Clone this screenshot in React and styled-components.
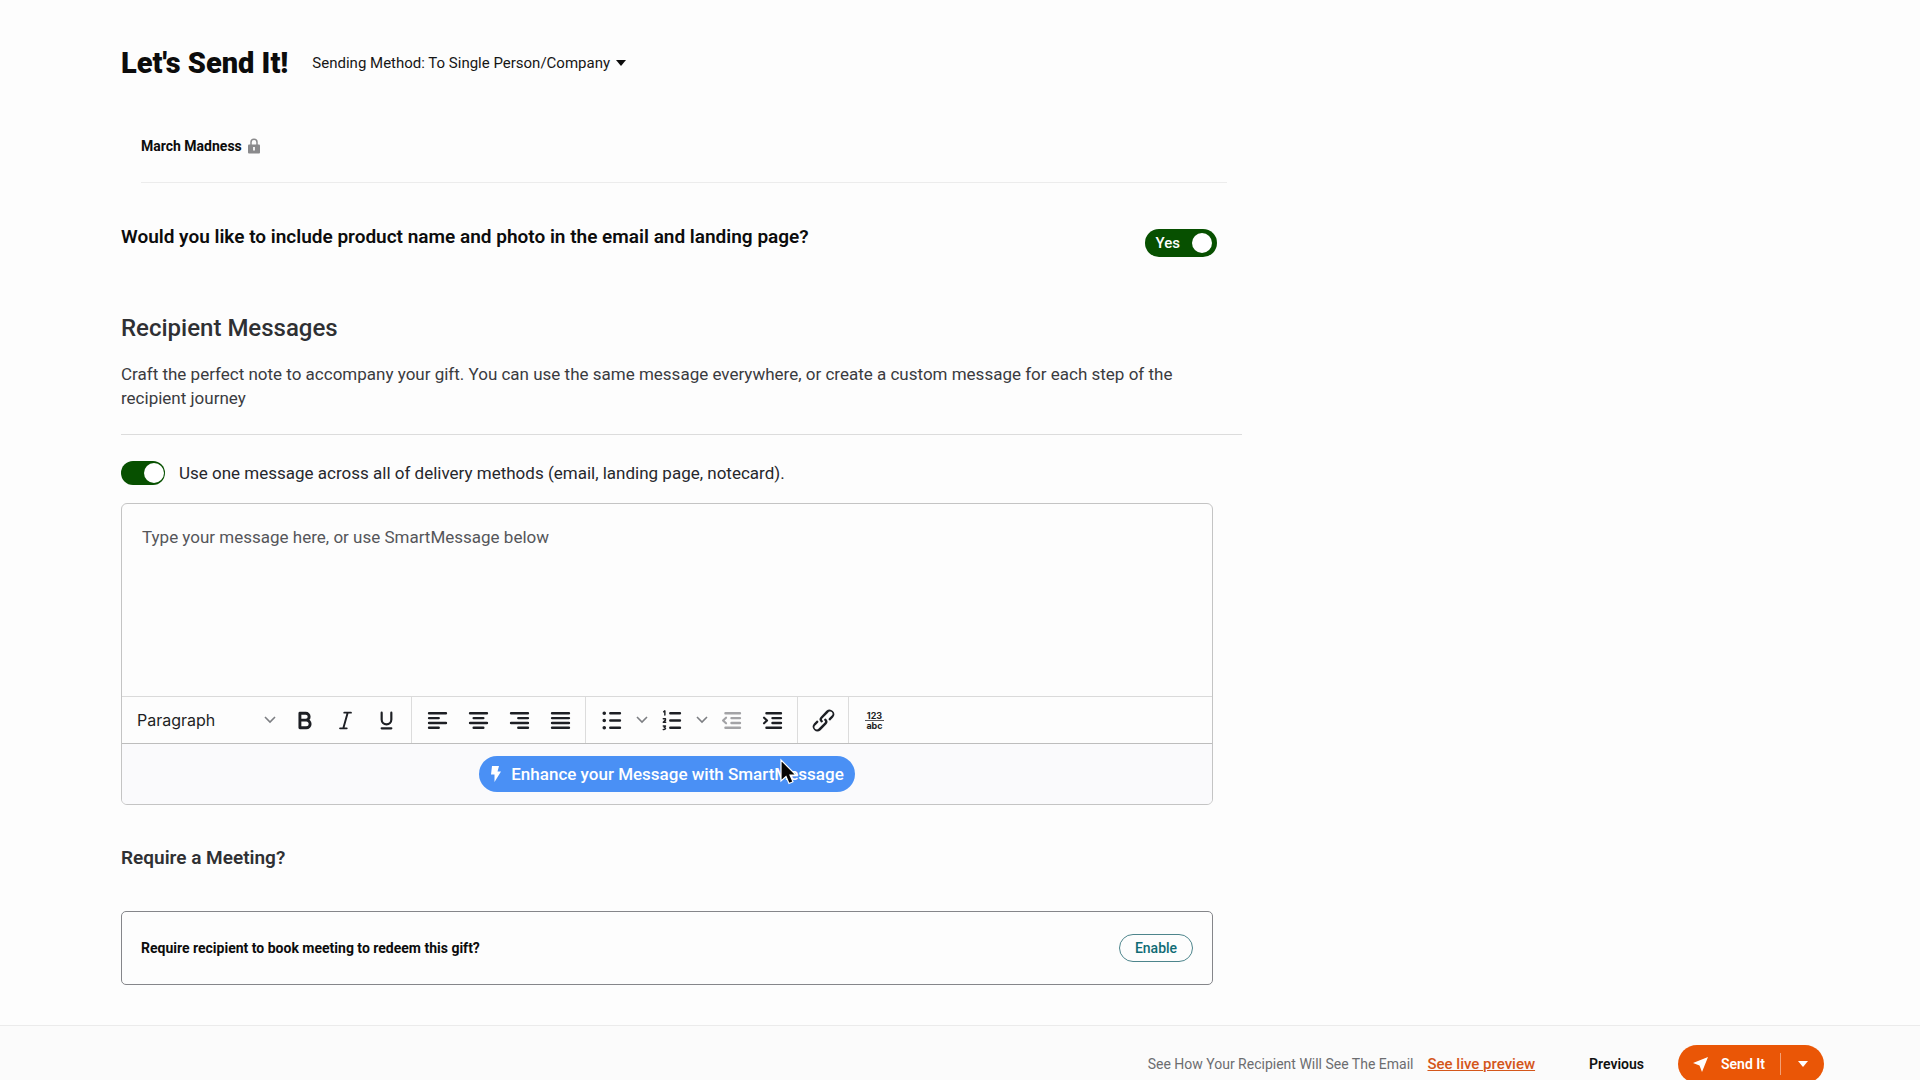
import React from 'react'
import styled, { createGlobalStyle } from 'styled-components'

const GlobalStyle = createGlobalStyle`
  * {
    box-sizing: border-box;
  }
  body {
    margin: 0;
    background-color: #fdfdfd;
    color: #0c0c0c;
    font-family: Roboto, "Liberation Sans", sans-serif;
    font-size: 16px;
  }
  h1, h2, h3, p {
    margin: 0;
  }
  button, select, textarea {
    font-family: inherit;
  }
`;

const Page = styled.div`
  display: flex;
  flex-direction: column;
  min-height: 100vh;
`;

const Content = styled.main`
  flex: 1;
  width: 100%;
  max-width: 1242px;
  padding: 40px 0 40px 121px;
`;

const Header = styled.header`
  display: flex;
  align-items: center;
  gap: 24px;
  height: 46px;
`;

const Title = styled.h1`
  font-size: 29px;
  font-weight: 900;
`;

const SelectBox = styled.div`
  position: relative;
  display: flex;
  align-items: center;
`;

const MethodSelect = styled.select`
  appearance: none;
  width: 316px;
  height: 36px;
  padding: 0;
  border: none;
  background: transparent;
  color: #161616;
  font-size: 15px;
`;

const SelectIcon = styled.svg`
  position: absolute;
  right: ${(props) => props.$right}px;
  pointer-events: none;
`;

const Campaign = styled.div`
  display: flex;
  align-items: center;
  gap: 6px;
  height: 73px;
  margin: 24px 15px 0 20px;
  border-bottom: 1px solid #ececec;
  font-size: 14px;
  font-weight: 700;
`;

const Section = styled.section`
  margin-right: 29px;
`;

const QuestionRow = styled.div`
  display: flex;
  align-items: flex-start;
  justify-content: space-between;
  margin-top: 42px;
`;

const Question = styled.h2`
  font-size: 19px;
  font-weight: 600;
  line-height: 24px;
`;

const Switch = styled.label`
  display: flex;
  align-items: center;
  justify-content: flex-end;
  width: ${(props) => (props.$wide ? 72 : 44)}px;
  height: ${(props) => (props.$wide ? 28 : 24)}px;
  margin: ${(props) => (props.$wide ? '4px -4px 0 0' : '0')};
  padding: 0 ${(props) => (props.$wide ? 5 : 1)}px;
  gap: 12px;
  border-radius: 14px;
  background-color: #075000;
  color: #fff;
  font-size: 15px;
  font-weight: 500;
  cursor: pointer;
`;

const SwitchInput = styled.input`
  appearance: none;
  width: 20px;
  height: 20px;
  margin: 0;
  border-radius: 50%;
  background-color: #fff;
`;

const Heading = styled.h2`
  margin-top: 55px;
  color: #2f3033;
  font-size: 24px;
  font-weight: 500;
  line-height: 32px;
`;

const Description = styled.p`
  margin-top: 18px;
  color: #3a3b3f;
  font-size: 17px;
  line-height: 24px;
`;

const Divider = styled.hr`
  height: 1px;
  margin: 24px 0 26px;
  border: none;
  background-color: #dcdcdc;
`;

const OneMessage = styled.div`
  display: flex;
  align-items: center;
  gap: 14px;
  color: #26272c;
  font-size: 17px;
`;

const Editor = styled.div`
  margin-top: 18px;
  border: 1px solid #c4c4c4;
  border-radius: 6px;
  overflow: hidden;
`;

const Message = styled.textarea`
  display: block;
  width: 100%;
  height: 192px;
  padding: 21px 20px;
  border: none;
  outline: none;
  resize: none;
  background: transparent;
  font-size: 17px;
  line-height: 24px;
  &::placeholder {
    color: #55565a;
    opacity: 1;
  }
`;

const Toolbar = styled.div`
  display: flex;
  height: 48px;
  border-top: 1px solid #dadada;
  border-bottom: 1px solid #bdbdbd;
`;

const Group = styled.div`
  display: flex;
  align-items: center;
  padding: 0 4px 0 5px;
  border-right: ${(props) => (props.$last ? 'none' : '1px solid #dcdcdc')};
`;

const FormatSelect = styled.select`
  appearance: none;
  width: 157px;
  height: 34px;
  padding: 0 0 0 10px;
  border: none;
  background: transparent;
  color: #1d1f24;
  font-family: Inter, "Liberation Sans", sans-serif;
  font-size: 16px;
`;

const Tool = styled.button`
  display: flex;
  flex-direction: column;
  align-items: center;
  justify-content: center;
  width: ${(props) => (props.$narrow ? 19 : 41)}px;
  height: 34px;
  padding: 0;
  border: none;
  background: transparent;
  color: ${(props) => (props.$muted ? '#a3a3a6' : '#1d1f24')};
`;

const CountText = styled.span`
  font-family: Inter, "Liberation Sans", sans-serif;
  font-size: 9px;
  font-weight: 700;
  line-height: 9px;
  &:first-child {
    width: 19px;
    border-bottom: 1px solid #55565a;
  }
`;

const SmartBar = styled.div`
  display: flex;
  align-items: center;
  justify-content: center;
  height: 60px;
  background-color: #fafafc;
`;

const SmartButton = styled.button`
  position: relative;
  display: flex;
  align-items: center;
  gap: 9px;
  height: 36px;
  padding: 0 11px 0 10px;
  border: none;
  border-radius: 18px;
  background-color: #4a90f5;
  color: #fff;
  font-size: 17px;
  font-weight: 500;
`;

const Pointer = styled.svg`
  position: absolute;
  top: 2px;
  right: 58px;
`;

const MeetingHeading = styled.h3`
  margin-top: 41px;
  color: #2f3033;
  font-size: 19px;
  font-weight: 600;
  line-height: 24px;
`;

const MeetingCard = styled.div`
  display: flex;
  align-items: center;
  justify-content: space-between;
  height: 74px;
  margin-top: 41px;
  padding: 0 19px;
  border: 1px solid #85868a;
  border-radius: 5px;
  font-size: 14px;
  font-weight: 700;
`;

const EnableButton = styled.button`
  width: 74px;
  height: 28px;
  padding: 0;
  border: 1px solid #4d858c;
  border-radius: 14px;
  background: transparent;
  color: #0f6b74;
  font-size: 14px;
  font-weight: 500;
`;

const Footer = styled.footer`
  display: flex;
  justify-content: flex-end;
  align-items: center;
  padding: 19px 96px 19px 0;
  border-top: 1px solid #ebebeb;
  background-color: #fbfbfb;
`;

const FooterText = styled.span`
  margin-right: 14px;
  color: #6c6d70;
  font-size: 14px;
`;

const PreviewLink = styled.a`
  color: #d4561a;
  font-size: 15px;
  font-weight: 500;
`;

const PreviousButton = styled.button`
  margin: 0 34px 0 54px;
  padding: 0;
  border: none;
  background: transparent;
  color: #111;
  font-size: 14px;
  font-weight: 600;
`;

const SendGroup = styled.div`
  display: flex;
  align-items: center;
  width: 146px;
  height: 38px;
  border-radius: 19px;
  background-color: #ea5606;
`;

const SendButton = styled.button`
  display: flex;
  align-items: center;
  gap: 13px;
  width: 103px;
  height: 22px;
  padding: 0 0 0 15px;
  border: none;
  border-right: 1px solid #f3a075;
  background: transparent;
  color: #fff;
  font-size: 14px;
  font-weight: 600;
`;

const SendMore = styled.button`
  display: flex;
  flex: 1;
  align-items: center;
  justify-content: center;
  height: 38px;
  padding: 0;
  border: none;
  background: transparent;
`;

const Icon = ({ children }) => (
  <svg width="29" height="29" viewBox="0 0 24 24" fill="none" stroke="currentColor" strokeWidth="2" strokeLinecap="round" strokeLinejoin="round" aria-hidden="true">
    {children}
  </svg>
)

const Chevron = () => (
  <svg width="12" height="8" viewBox="0 0 12 8" fill="none" stroke="#7d7f83" strokeWidth="1.6" aria-hidden="true">
    <path d="M1 1l5 5 5-5" />
  </svg>
)

const aligns = [
  { label: 'Align left', d: 'M5 6h14M5 10h8M5 14h14M5 18h8' },
  { label: 'Align center', d: 'M5 6h14M8 10h8M5 14h14M8 18h8' },
  { label: 'Align right', d: 'M5 6h14M11 10h8M5 14h14M11 18h8' },
  { label: 'Justify', d: 'M5 6h14M5 10h14M5 14h14M5 18h14' },
]

export default function App() {
  return (
    <Page>
      <GlobalStyle />
      <Content>
        <Header>
          <Title>Let's Send It!</Title>
          <SelectBox>
            <MethodSelect aria-label="Sending method">
              <option>Sending Method: To Single Person/Company</option>
            </MethodSelect>
            <SelectIcon $right={2} width="10" height="6" viewBox="0 0 10 6">
              <path d="M0 0h10L5 6z" fill="#0c0c0c" />
            </SelectIcon>
          </SelectBox>
        </Header>
        <Campaign>
          March Madness
          <svg width="12" height="16" viewBox="0 0 12 16" aria-hidden="true">
            <path d="M3 7V4.200a3 3 0 0 1 6 0V7" fill="none" stroke="#8a8a8c" strokeWidth="1.500" />
            <rect x="0" y="6.500" width="12" height="9" rx="1" fill="#8a8a8c" />
            <path d="M6 9v3.500" stroke="#eee" strokeWidth="2" />
          </svg>
        </Campaign>

        <Section>
          <QuestionRow>
            <Question>Would you like to include product name and photo in the email and landing page?</Question>
            <Switch $wide>
              Yes
              <SwitchInput type="checkbox" role="switch" defaultChecked />
            </Switch>
          </QuestionRow>
          <Heading>Recipient Messages</Heading>
          <Description>
            Craft the perfect note to accompany your gift. You can use the same message everywhere, or create a custom message for each step of the recipient journey
          </Description>
        </Section>
        <Divider />

        <Section>
          <OneMessage>
            <Switch htmlFor="one-message">
              <SwitchInput id="one-message" type="checkbox" role="switch" defaultChecked />
            </Switch>
            <label htmlFor="one-message">Use one message across all of delivery methods (email, landing page, notecard).</label>
          </OneMessage>

          <Editor>
            <Message aria-label="Message" placeholder="Type your message here, or use SmartMessage below" />
            <Toolbar>
              <Group>
                <SelectBox>
                  <FormatSelect aria-label="Text format">
                    <option>Paragraph</option>
                  </FormatSelect>
                  <SelectIcon $right={8} width="12" height="8" viewBox="0 0 12 8" fill="none" stroke="#7d7f83" strokeWidth="1.6">
                    <path d="M1 1l5 5 5-5" />
                  </SelectIcon>
                </SelectBox>
                <Tool aria-label="Bold">
                  <Icon><path strokeWidth="2.400" d="M8.200 6h4.800a2.800 2.800 0 0 1 0 5.700H8.200zM8.200 11.700h5.300a3 3 0 0 1 0 6.300H8.200z" /></Icon>
                </Tool>
                <Tool aria-label="Italic">
                  <Icon><path strokeWidth="1.600" d="M11 5.500h5.500M7.500 18.500H13M13.800 5.500l-3.600 13" /></Icon>
                </Tool>
                <Tool aria-label="Underline">
                  <Icon><path strokeWidth="1.800" d="M8 5.500v5.700a4 4 0 0 0 8 0V5.500M8 18.500h8" /></Icon>
                </Tool>
              </Group>
              <Group>
                {aligns.map((align) => (
                  <Tool key={align.label} aria-label={align.label}>
                    <Icon><path d={align.d} /></Icon>
                  </Tool>
                ))}
              </Group>
              <Group>
                <Tool aria-label="Bullet list">
                  <Icon>
                    <path d="M11 6h8M11 12h8M11 18h8" />
                    <path strokeWidth="3" d="M6 6h0M6 12h0M6 18h0" />
                  </Icon>
                </Tool>
                <Tool $narrow aria-label="Bullet styles"><Chevron /></Tool>
                <Tool aria-label="Numbered list">
                  <Icon>
                    <path d="M11 6h8M11 12h8M11 18h8" />
                    <path strokeWidth="1.200" d="M5.500 4.800l1-.8v3.500M5.200 10.500h1.800v1.200l-1.800 1.800h2M5.200 16.500h1.800l-1 1.300c1.600 0 1.400 2-.8 1.700" />
                  </Icon>
                </Tool>
                <Tool $narrow aria-label="Number styles"><Chevron /></Tool>
                <Tool $muted aria-label="Decrease indent">
                  <Icon>
                    <path d="M7 6h12M12 10h7M12 14h7M7 18h12" />
                    <path strokeWidth="1.800" d="M7.500 9.700L5 12l2.500 2.300" />
                  </Icon>
                </Tool>
                <Tool aria-label="Increase indent">
                  <Icon>
                    <path d="M7 6h12M12 10h7M12 14h7M7 18h12" />
                    <path strokeWidth="1.800" d="M5 9.700L7.500 12 5 14.300" />
                  </Icon>
                </Tool>
              </Group>
              <Group>
                <Tool aria-label="Insert link">
                  <Icon>
                    <path stroke="none" fill="currentColor" d="M6.200 12.300a1 1 0 0 1 1.400 1.400l-2 2a2 2 0 1 0 2.600 2.800l4.800-4.800a1 1 0 0 0 0-1.400 1 1 0 1 1 1.400-1.300 2.900 2.900 0 0 1 0 4L9.600 20a3.900 3.900 0 0 1-5.500-5.500l2-2Zm11.600-.6a1 1 0 0 1-1.400-1.400l2-2a2 2 0 1 0-2.600-2.800L11 10.300a1 1 0 0 0 0 1.400A1 1 0 1 1 9.600 13a2.900 2.900 0 0 1 0-4L14.400 4a3.900 3.900 0 0 1 5.500 5.500l-2 2Z" />
                  </Icon>
                </Tool>
              </Group>
              <Group $last>
                <Tool aria-label="Word count">
                  <CountText>123</CountText>
                  <CountText>abc</CountText>
                </Tool>
              </Group>
            </Toolbar>
            <SmartBar>
              <SmartButton>
                <svg width="13" height="18" viewBox="0 0 13 18" aria-hidden="true">
                  <path d="M3 1h7L8.500 6.500H12L5.500 17V9.500H2z" fill="#fff" />
                </svg>
                Enhance your Message with SmartMessage
                <Pointer width="18" height="28" viewBox="0 0 18 28" aria-hidden="true">
                  <path d="M2 2v21l5-4.500 3 7 4-1.700-3-6.800h6z" fill="#050505" stroke="#fff" strokeWidth="1.200" />
                </Pointer>
              </SmartButton>
            </SmartBar>
          </Editor>

          <MeetingHeading>Require a Meeting?</MeetingHeading>
          <MeetingCard>
            Require recipient to book meeting to redeem this gift?
            <EnableButton>Enable</EnableButton>
          </MeetingCard>
        </Section>
      </Content>

      <Footer>
        <FooterText>See How Your Recipient Will See The Email</FooterText>
        <PreviewLink href="#preview">See live preview</PreviewLink>
        <PreviousButton>Previous</PreviousButton>
        <SendGroup>
          <SendButton>
            <svg width="15" height="15" viewBox="0 0 15 15" aria-hidden="true">
              <path d="M15 0L0 6l6.500 2.500L9 15z" fill="#fff" />
            </svg>
            Send It
          </SendButton>
          <SendMore aria-label="More send options">
            <svg width="10" height="6" viewBox="0 0 10 6" aria-hidden="true">
              <path d="M0 0h10L5 6z" fill="#fff" />
            </svg>
          </SendMore>
        </SendGroup>
      </Footer>
    </Page>
  )
}
